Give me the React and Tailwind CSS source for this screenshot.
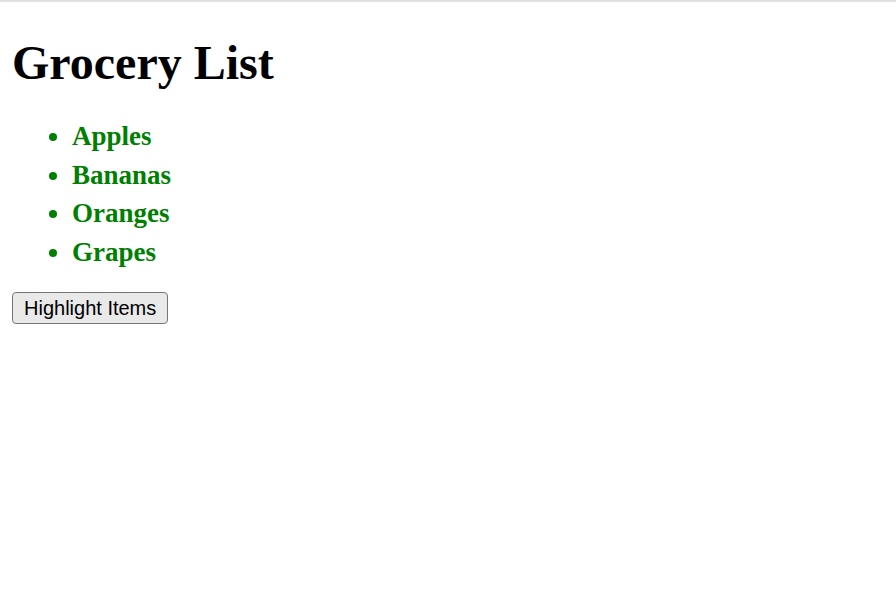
export default function App() {
  const items = ['Apples', 'Bananas', 'Oranges', 'Grapes'];

  return (
    <div className="min-h-[593px] bg-white border-t-2 border-[#e0e0e0]">
      <div className="px-3 pt-[33px]">
        <h1 className="font-['Liberation_Serif',serif] text-[48px] font-bold leading-[55px] text-black">Grocery List</h1>
        <ul className="mt-[27px] pl-[60px] list-disc font-['Liberation_Serif',serif] text-[27px] font-bold text-[#008000] leading-[38.7px]">
          {items.map((item) => (
            <li key={item}>{item}</li>
          ))}
        </ul>
        <button className="mt-[20px] px-[11px] h-[32px] border border-[#767676] rounded-[4px] bg-[#e9e9e9] font-['Liberation_Sans',sans-serif] text-[20px] text-black">
          Highlight Items
        </button>
      </div>
    </div>
  );
}
